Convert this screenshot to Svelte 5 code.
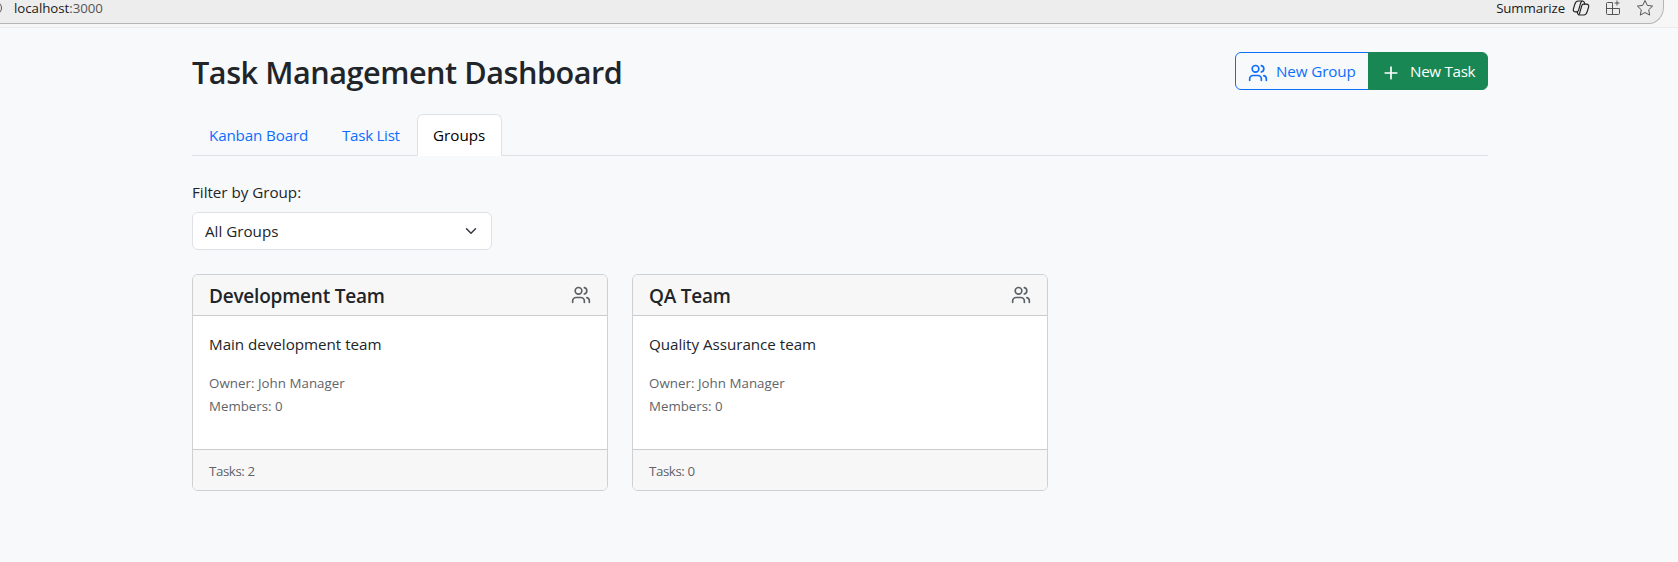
<script>
  const tabs = [
    { id: 'kanban', label: 'Kanban Board' },
    { id: 'list', label: 'Task List' },
    { id: 'groups', label: 'Groups' }
  ];
  let active = $state('groups');

  const groups = [
    { name: 'Development Team', about: 'Main development team', owner: 'John Manager', members: 0, tasks: 2 },
    { name: 'QA Team', about: 'Quality Assurance team', owner: 'John Manager', members: 0, tasks: 0 }
  ];
</script>

{#snippet usersIcon()}
  <svg class="icon" viewBox="0 0 24 24" aria-hidden="true">
    <path d="M16 21v-2a4 4 0 0 0-4-4H6a4 4 0 0 0-4 4v2" />
    <circle cx="9" cy="7" r="4" />
    <path d="M22 21v-2a4 4 0 0 0-3-3.87" />
    <path d="M16 3.13a4 4 0 0 1 0 7.75" />
  </svg>
{/snippet}

<div class="chrome">
  <div class="address">
    <svg class="info" viewBox="0 0 16 16" aria-hidden="true"><circle cx="8" cy="8" r="6.5" /></svg>
    <span class="url">localhost<span class="port">:3000</span></span>
    <span class="summarize">Summarize</span>
    <svg class="copilot" viewBox="0 0 18 18" aria-hidden="true">
      <path d="M6.2 2h4.300c1 0 1.500.5 1.800 1.400l.5 1.700h1.400c2 0 2.900 1.300 2.400 3l-1.400 4.600c-.6 2-1.500 3.300-3.400 3.300H7.500c-1 0-1.500-.5-1.800-1.400l-.5-1.700H3.800c-2 0-2.900-1.300-2.400-3l1.400-4.600C3.400 3.300 4.300 2 6.200 2z" />
      <path d="M10.300 2.200c-.9.200-1.300.8-1.600 1.700L6.600 11.200c-.3 1-.8 1.700-1.700 1.700M13.100 5.100h-1.600c-.9 0-1.400.6-1.700 1.500l-2.200 7.500c-.3.900-.6 1.500-1.300 1.700" />
    </svg>
    <svg class="apps" viewBox="0 0 18 18" aria-hidden="true">
      <path d="M8.500 3.500H3.500a1 1 0 0 0-1 1V14.500a1 1 0 0 0 1 1H14.500a1 1 0 0 0 1-1V9.500H2.500M8.500 3.500V15.500M13 1.500v5M10.500 4h5" />
    </svg>
    <svg class="star" viewBox="0 0 18 18" aria-hidden="true">
      <path d="M9 1.500l2.300 4.900 5.300.7-3.900 3.700 1 5.300L9 13.500l-4.700 2.600 1-5.300L1.400 7.100l5.300-.7z" />
    </svg>
  </div>
</div>

<main class="page">
  <header class="top">
    <h1>Task Management Dashboard</h1>
    <div class="btn-group">
      <button class="btn outline">{@render usersIcon()}<span>New Group</span></button>
      <button class="btn solid">
        <svg class="icon" viewBox="0 0 24 24" aria-hidden="true"><path d="M5 12h14M12 5v14" /></svg>
        <span>New Task</span>
      </button>
    </div>
  </header>

  <nav class="tabs">
    {#each tabs as tab (tab.id)}
      <button class="tab {tab.id}" class:active={active === tab.id} onclick={() => (active = tab.id)}>{tab.label}</button>
    {/each}
  </nav>

  <div class="filter">
    <span class="label">Filter by Group:</span>
    <div class="select">
      <span>All Groups</span>
      <svg viewBox="0 0 16 16" aria-hidden="true"><path d="m2 5 6 6 6-6" /></svg>
    </div>
  </div>

  <section class="grid">
    {#each groups as group (group.name)}
      <article class="card">
        <div class="card-head">
          <h2>{group.name}</h2>
          {@render usersIcon()}
        </div>
        <div class="card-body">
          <p class="about">{group.about}</p>
          <p class="meta owner">Owner: {group.owner}</p>
          <p class="meta">Members: {group.members}</p>
        </div>
        <div class="card-foot">Tasks: {group.tasks}</div>
      </article>
    {/each}
  </section>
</main>

<style>
  :global(body) {
    background: #f8f9fb;
    overflow: hidden;
  }
  .chrome, .page, button {
    font-family: "Open Sans", "Noto Sans", sans-serif;
  }
  .chrome, .chrome *, .page, .page * { box-sizing: border-box; }
  .chrome {
    height: 28px;
    background: #f7f7f7;
    border-bottom: 1px solid #ebebeb;
  }
  .address {
    display: flex;
    align-items: flex-start;
    width: 1664px;
    height: 24px;
    background: #ededed;
    border: solid #b5b5b5;
    border-width: 0 1px 1px 0;
    border-bottom-right-radius: 15px 17px;
    overflow: hidden;
    font-size: 13.3px;
    line-height: 16px;
    color: #1b1b1b;
  }
  .address svg { fill: none; stroke: #555; stroke-width: 1; flex: none; }
  .info { width: 16px; height: 16px; margin-left: -13px; }
  .url { margin-left: 11px; letter-spacing: -0.05px; }
  .port { color: #555; }
  .summarize { margin-left: auto; letter-spacing: -0.12px; }
  .address .copilot { width: 18px; height: 18px; margin-left: 7px; margin-top: -1px; stroke: #222; stroke-width: 1.2; }
  .apps { width: 18px; height: 18px; margin-left: 14px; margin-top: -1px; }
  .star { width: 18px; height: 18px; margin: -1px 9px 0 14px; }

  .page {
    width: 1297px;
    margin: 0 auto 0 191px;
    padding: 24px 0 0 1px;
    font-size: 15.2px;
    line-height: 24px;
    color: #212529;
  }
  .top { display: flex; justify-content: space-between; align-items: center; height: 38px; }
  h1, h2, p { margin: 0; }
  h1 { font-size: 30.6px; font-weight: 600; line-height: 38px; letter-spacing: -0.45px; padding-top: 2px; }
  .icon {
    width: 20px; height: 20px; flex: none;
    fill: none; stroke: currentColor; stroke-width: 2;
    stroke-linecap: round; stroke-linejoin: round;
  }
  .btn-group { display: flex; }
  .btn {
    display: flex;
    align-items: center;
    gap: 8px;
    height: 38px;
    padding: 0 12px;
    font-size: 15.2px;
    line-height: 24px;
    letter-spacing: -0.1px;
    white-space: nowrap;
    border: 1px solid;
  }
  .btn .icon { margin-top: 3px; }
  .outline { width: 134px; color: #0d6efd; border-color: #0d6efd; background: transparent; border-radius: 6px 0 0 6px; }
  .solid { width: 120px; margin-left: -1px; letter-spacing: -0.3px; gap: 9px; color: #fff; border-color: #198754; background: #198754; border-radius: 0 6px 6px 0; }

  .tabs { display: flex; height: 42px; margin-top: 24px; border-bottom: 1px solid #dee2e6; }
  .tab {
    height: 42px;
    padding: 0 0 0 16px;
    font-size: 15.2px;
    text-align: left;
    white-space: nowrap;
    color: #0d6efd;
    background: none;
    border: 1px solid transparent;
    border-radius: 6px 6px 0 0;
  }
  .kanban { width: 133px; letter-spacing: -0.15px; }
  .list { width: 92px; letter-spacing: -0.3px; }
  .groups { width: 85px; padding-left: 15px; }
  .tab.active { color: #000; background: #fff; border-color: #dee2e6 #dee2e6 #fff; }

  .filter { display: flex; flex-direction: column; gap: 8px; margin-top: 24px; }
  .label { letter-spacing: -0.02px; }
  .select {
    display: flex;
    align-items: center;
    justify-content: space-between;
    width: 300px;
    height: 38px;
    padding: 0 12px;
    background: #fff;
    border: 1px solid #dee2e6;
    border-radius: 6px;
  }
  .select svg { width: 16px; height: 12px; fill: none; stroke: #343a40; stroke-width: 2; stroke-linecap: round; stroke-linejoin: round; }

  .grid { display: grid; grid-template-columns: repeat(3, 416px); gap: 24px; margin-top: 24px; }
  .card { height: 217px; display: flex; flex-direction: column; background: #fff; border: 1px solid #cfd0d2; border-radius: 6px; overflow: hidden; }
  .card-head { display: flex; align-items: center; justify-content: space-between; height: 41px; padding: 0 16px; background: #f7f7f7; border-bottom: 1px solid #cbcccd; }
  .card-head .icon { color: #5c6166; }
  h2 { font-size: 19px; font-weight: 600; line-height: 24px; letter-spacing: -0.22px; padding-top: 2px; }
  .card-body { flex: 1; padding: 16px; }
  .about { margin-bottom: 16px; letter-spacing: -0.03px; }
  .meta, .card-foot { font-size: 13.3px; line-height: 23px; color: #5f6469; }
  .owner { letter-spacing: 0.04px; }
  .card-foot { height: 41px; padding: 10px 16px 0; letter-spacing: -0.4px; background: #f7f7f7; border-top: 1px solid #cbcccd; }
</style>
